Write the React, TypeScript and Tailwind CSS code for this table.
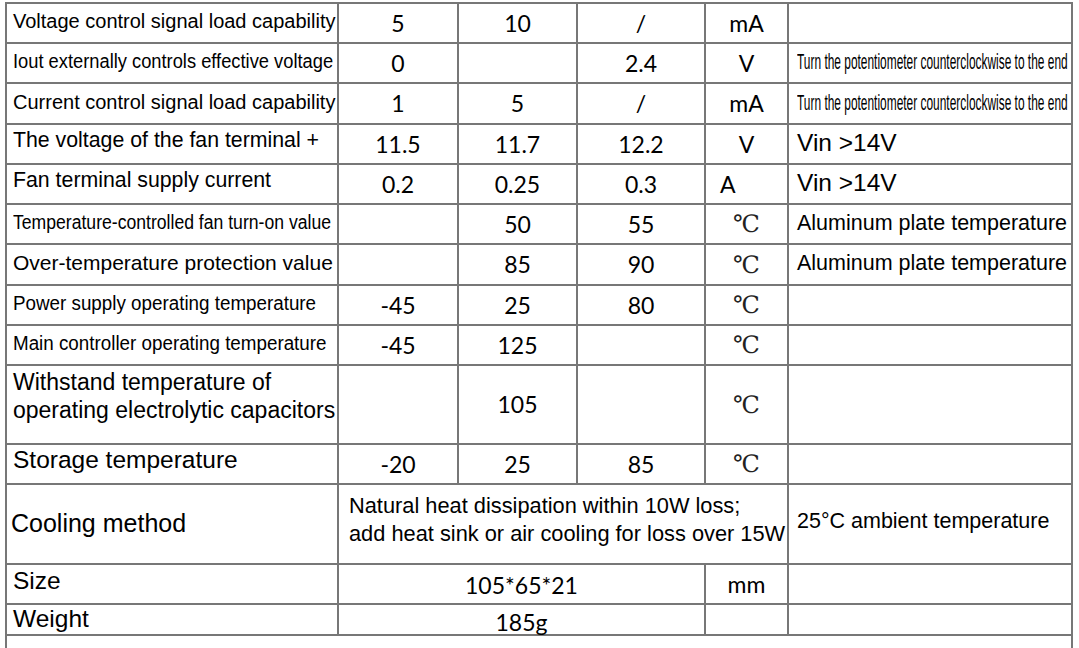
const arial = "font-['Liberation_Sans',Arial,sans-serif]";
const calibri = "font-['Lato','Open_Sans',sans-serif]";
const degC = "font-['DejaVu_Serif','Liberation_Serif','Noto_Sans_CJK_SC',serif]";

type LabelProps = { children: React.ReactNode; text?: string; squeeze?: string; box?: string };

function Label({ children, text = "text-[20px]", squeeze = "", box = "items-center pb-[4px]" }: LabelProps) {
  return (
    <div className={`bg-white flex pl-[6px] ${box}`}>
      <span className={`${arial} ${text} ${squeeze} inline-block origin-left whitespace-nowrap text-black`}>
        {children}
      </span>
    </div>
  );
}

function Val({ children, box = "" }: { children?: React.ReactNode; box?: string }) {
  return (
    <div className={`bg-white flex items-center justify-center ${calibri} text-[23px] text-black ${box}`}>
      {children}
    </div>
  );
}

function Deg() {
  return (
    <div className={`bg-white flex items-center justify-center ${degC} text-[24px] font-light text-[#222]`}>
      ℃
    </div>
  );
}

function Note({ children, text = "text-[21.5px]", squeeze = "", box = "items-center pb-[2px]" }: LabelProps) {
  return (
    <div className={`bg-white flex pl-[8px] ${box}`}>
      <span className={`${arial} ${text} ${squeeze} inline-block origin-left whitespace-nowrap text-black`}>
        {children}
      </span>
    </div>
  );
}

const pot = "Turn the potentiometer counterclockwise to the end";

export default function App() {
  return (
    <div className="min-h-screen bg-white pt-[2px] pl-[5px]">
      <div className="grid w-[1068px] grid-cols-[330px_118px_117px_126px_81px_282px] grid-rows-[38px_38px_39px_38px_38px_38px_39px_38px_38px_77px_38px_78px_38px_29px_40px] gap-[2px] bg-[#777] p-[2px]">
        {/* voltage control */}
        <Label>Voltage control signal load capability</Label>
        <Val>5</Val>
        <Val>10</Val>
        <Val>/</Val>
        <Val>mA</Val>
        <div className="bg-white" />

        {/* iout */}
        <Label squeeze="scale-x-[0.915]">Iout externally controls effective voltage</Label>
        <Val>0</Val>
        <Val />
        <Val>2.4</Val>
        <Val>V</Val>
        <Note text="text-[22px]" squeeze="scale-x-[0.542]" box="items-center pb-[3px]">{pot}</Note>

        {/* current control */}
        <Label>Current control signal load capability</Label>
        <Val>1</Val>
        <Val>5</Val>
        <Val>/</Val>
        <Val>mA</Val>
        <Note text="text-[22px]" squeeze="scale-x-[0.542]" box="items-center pb-[3px]">{pot}</Note>

        {/* fan terminal voltage */}
        <Label text="text-[21.3px]" box="items-center pb-[6px]">The voltage of the fan terminal +</Label>
        <Val>11.5</Val>
        <Val>11.7</Val>
        <Val>12.2</Val>
        <Val>V</Val>
        <Note text="text-[24.5px]">Vin &gt;14V</Note>

        {/* fan current */}
        <Label text="text-[21.3px]" box="items-center pb-[6px]">Fan terminal supply current</Label>
        <Val>0.2</Val>
        <Val>0.25</Val>
        <Val>0.3</Val>
        <Val box="!justify-start pl-[14px]">A</Val>
        <Note text="text-[24.5px]">Vin &gt;14V</Note>

        {/* temp fan on */}
        <Label squeeze="scale-x-[0.88]">Temperature-controlled fan turn-on value</Label>
        <Val />
        <Val>50</Val>
        <Val>55</Val>
        <Deg />
        <Note>Aluminum plate temperature</Note>

        {/* over temp */}
        <Label text="text-[21px]">Over-temperature protection value</Label>
        <Val />
        <Val>85</Val>
        <Val>90</Val>
        <Deg />
        <Note>Aluminum plate temperature</Note>

        {/* power supply temp */}
        <Label squeeze="scale-x-[0.94]">Power supply operating temperature</Label>
        <Val>-45</Val>
        <Val>25</Val>
        <Val>80</Val>
        <Deg />
        <div className="bg-white" />

        {/* main controller temp */}
        <Label squeeze="scale-x-[0.94]">Main controller operating temperature</Label>
        <Val>-45</Val>
        <Val>125</Val>
        <Val />
        <Deg />
        <div className="bg-white" />

        {/* capacitors */}
        <Label text="text-[23px] leading-[28px]" box="items-start pt-[2px]">
          Withstand temperature of
          <br />
          operating electrolytic capacitors
        </Label>
        <Val />
        <Val>105</Val>
        <Val />
        <Deg />
        <div className="bg-white" />

        {/* storage */}
        <Label text="text-[24.5px]" box="items-center pb-[7px]">Storage temperature</Label>
        <Val>-20</Val>
        <Val>25</Val>
        <Val>85</Val>
        <Deg />
        <div className="bg-white" />

        {/* cooling */}
        <div className="flex items-center bg-white pl-[4px]">
          <span className={`${arial} text-[25px] text-black`}>Cooling method</span>
        </div>
        <div className={`col-span-4 bg-white pl-[10px] pt-[7px] ${arial} text-[21.8px] leading-[28px] text-black whitespace-nowrap`}>
          Natural heat dissipation within 10W loss;
          <br />
          add heat sink or air cooling for loss over 15W
        </div>
        <Note box="items-center pb-[6px]">25°C ambient temperature</Note>

        {/* size */}
        <Label text="text-[24.5px]" box="items-center pb-[5px]">Size</Label>
        <Val box="col-span-3 pt-[2px]">105*65*21</Val>
        <Val>mm</Val>
        <div className="bg-white" />

        {/* weight */}
        <Label text="text-[24.5px]" box="items-center pb-[1px]">Weight</Label>
        <Val box="col-span-3 pt-[6px]">185g</Val>
        <div className="bg-white" />
        <div className="bg-white" />

        <div className="col-span-6 bg-white" />
      </div>
    </div>
  );
}
